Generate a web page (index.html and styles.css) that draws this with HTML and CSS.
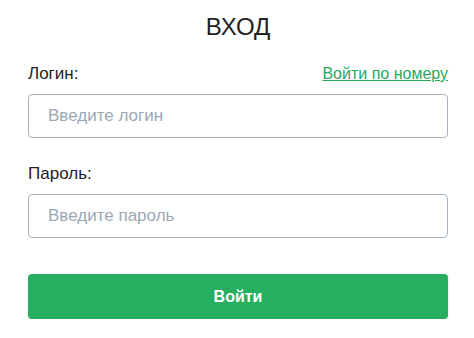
FILE: index.html
```html
<!DOCTYPE html>
<html lang="ru">
<head>
<meta charset="utf-8">
<link rel="stylesheet" href="styles.css">
</head>
<body>
<div class="login">
  <h1 class="title">ВХОД</h1>
  <div class="row">
    <label class="label" for="login">Логин:</label>
    <a class="alt-link" href="#">Войти по номеру</a>
  </div>
  <input class="field" id="login" type="text" placeholder="Введите логин">
  <div class="row row-pass">
    <label class="label" for="pass">Пароль:</label>
  </div>
  <input class="field" id="pass" type="password" placeholder="Введите пароль">
  <button class="submit" type="button">Войти</button>
</div>
</body>
</html>
```
FILE: styles.css
```css
html, body {
  margin: 0;
  padding: 0;
  background: #ffffff;
}
body {
  font-family: "Liberation Sans", Arial, sans-serif;
  color: #222222;
}
.login {
  width: 420px;
  padding: 13px 27px 0 28px;
  display: flex;
  flex-direction: column;
}
.title {
  margin: 0;
  font-size: 24px;
  font-weight: 400;
  line-height: 28px;
  text-align: center;
  color: #222;
}
.row {
  display: flex;
  justify-content: space-between;
  align-items: baseline;
  margin-top: 23px;
  height: 19px;
}
.row-pass {
  margin-top: 26px;
}
.label {
  font-size: 17px;
  line-height: 19px;
  color: #222;
}
.alt-link {
  font-size: 16px;
  color: #27a85d;
  text-decoration: underline;
}
.field {
  box-sizing: border-box;
  margin-top: 11px;
  height: 44px;
  width: 100%;
  border: 1px solid #a7b4c0;
  border-radius: 4px;
  padding: 0 19px;
  font-family: "Liberation Sans", Arial, sans-serif;
  font-size: 17px;
  color: #222;
  outline: none;
}
.field::placeholder {
  color: #9aa8b6;
}
.submit {
  margin-top: 36px;
  height: 45px;
  width: 100%;
  border: none;
  border-radius: 4px;
  background: #27ae60;
  color: #ffffff;
  font-family: "Liberation Sans", Arial, sans-serif;
  font-size: 16px;
  font-weight: 700;
  box-shadow: 0 1px 3px rgba(0,0,0,0.12);
}
```
